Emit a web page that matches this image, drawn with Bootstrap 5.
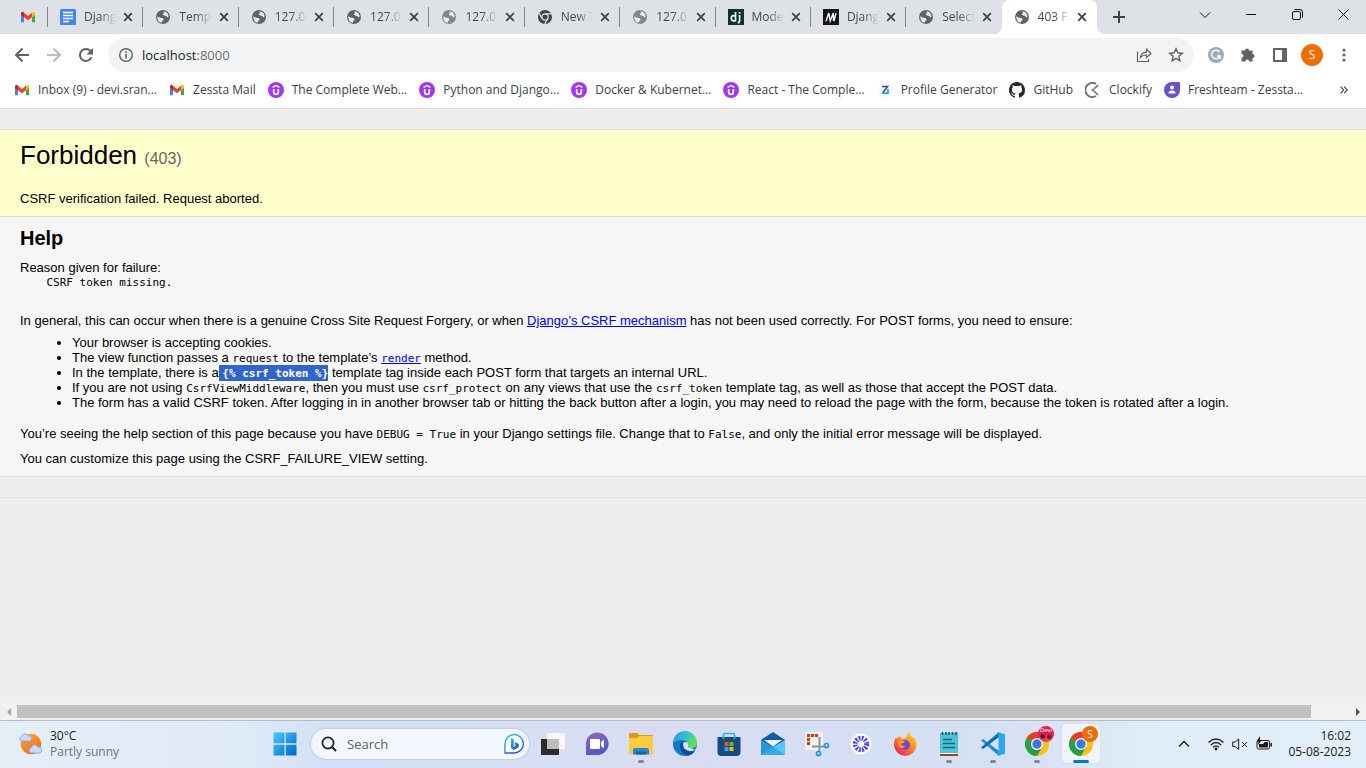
<!DOCTYPE html>
<html lang="en">
<head>
<meta charset="utf-8">
<meta name="viewport" content="width=device-width, initial-scale=1">
<title>403 Forbidden</title>
<link href="https://cdn.jsdelivr.net/npm/bootstrap@5.3.0/dist/css/bootstrap.min.css" rel="stylesheet">
<style>
  :root { --ui: "Open Sans", "Noto Sans", sans-serif; --ink: #5f6368; }
  body { font-family: var(--ui); font-size: 12px; line-height: 16px; color: #3c4043; background: #eee; }
  svg { display: block; flex: none; }
  button { border: 0; background: none; padding: 0; color: inherit; display: flex; align-items: center; justify-content: center; }

  /* tab strip */
  .strip { height: 34px; background: #dee1e6; }
  .tab-list { flex: 1 1 0; min-width: 0; }
  .tab-item { flex: 1 1 0; min-width: 0; padding: 0 7px 0 12px; position: relative; }
  .tab-item.pinned { flex: 0 0 48px; padding: 0 0 0 20px; }
  .tab-item::after { content: ""; position: absolute; right: 0; top: 7px; width: 1px; height: 20px; background: #80868b; }
  .tab-item.before-active::after { display: none; }
  .tab-item.current { background: #fff; border-radius: 8px 8px 0 0; }
  .tab-item.current::before, .tab-item.current::after { content: ""; display: block; position: absolute; top: auto; bottom: 0; width: 8px; height: 8px; }
  .tab-item.current::before { left: -8px; background: radial-gradient(circle at 0 0, #dee1e6 8px, #fff 8px); }
  .tab-item.current::after { right: -8px; background: radial-gradient(circle at 100% 0, #dee1e6 8px, #fff 8px); }
  .tab-name { flex: 1 1 0; min-width: 0; overflow: hidden; white-space: nowrap; margin: 0 4px 0 8px; color: #45494d; -webkit-mask-image: linear-gradient(90deg, #000 50%, transparent); mask-image: linear-gradient(90deg, #000 50%, transparent); }
  .tab-close { width: 16px; height: 16px; color: #3c4043; }
  .strip-end { flex: 0 0 269px; color: #111; }
  .new-tab { width: 44px; height: 34px; color: #3c4043; }
  .win-btn { width: 46px; height: 29px; }

  /* toolbar and bookmarks */
  .toolbar { height: 38px; padding: 4px 6px 0; color: var(--ink); }
  .tool { width: 32px; height: 34px; flex: none; }
  .omnibox { margin: 0 6px; height: 34px; border-radius: 17px; background: #f1f3f4; padding: 0 2px 0 10px; position: relative; }
  .omnibox input { position: absolute; inset: 0; width: 100%; opacity: 0; }
  .address { font-size: 13px; line-height: 20px; color: #202124; margin-left: 8px; }
  .address span { color: #696d72; }
  .avatar { width: 22px; height: 22px; border-radius: 50%; background: #ef6c00; color: #fff; font-size: 12px; }
  .bookmarks { height: 37px; padding: 0 14px; border-bottom: 1px solid #dadce0; }
  .bookmark-list { gap: 12px; }
  .bookmarks a { color: #3c4043; text-decoration: none; white-space: nowrap; display: flex; align-items: center; gap: 8px; }

  /* error document */
  .page-body { font-family: "Liberation Sans", Arial, sans-serif; font-size: 13px; line-height: 15px; color: #000; overflow: hidden; }
  .blank-band { height: 21px; border-bottom: 1px solid #ddd; }
  .summary { background: #ffc; padding: 10px 20px; border-bottom: 1px solid #ddd; }
  .summary h1 { font-size: 26px; line-height: 30px; font-weight: 400; margin: 0 0 21px; }
  .summary h1 span { font-size: 16px; line-height: 16px; color: #666; }
  .info { background: #f6f6f6; padding: 10px 20px; border-bottom: 1px solid #ddd; }
  .info h2 { font-size: 20px; line-height: 22px; font-weight: 700; margin: 0 0 11px; }
  .info p, .summary p { margin: 0; }
  .info pre, .info code { font-family: "DejaVu Sans Mono", monospace; font-size: 11px; line-height: 15px; color: inherit; }
  .info code { line-height: 1; }
  .info pre { margin: 0 0 23px; overflow: visible; }
  .info ul { margin: 7px 0 16px; padding-left: 52px; }
  .info p.closing { margin-top: 10px; }
  .info a { color: #00e; }
  .picked { background: #3065d0; color: #fff; padding-bottom: 1px; }

  /* horizontal scroll bar */
  .hbar { height: 17px; background: #f1f1f1; }
  .hbar button { width: 17px; }
  .hbar-thumb { height: 13px; background: #c1c1c1; }

  /* taskbar */
  .taskbar { height: 48px; padding-bottom: 2px; border-top: 1px solid #b3bdcb; background: linear-gradient(90deg, #e3eef7 0, #dfeaf7 18%, #d3e0f7 24%, #d7dff4 40%, #dadcf0 50%, #d5dff4 62%, #d7e1f3 75%, #e0ecf8 84%, #e2eef8 100%); color: #1b1b1b; }
  .side { flex: 1 0 0; }
  .weather { padding-left: 18px; gap: 7px; }
  .app { width: 44px; height: 45px; position: relative; }
  .app.running::after { content: ""; position: absolute; bottom: 3px; left: 19px; width: 6px; height: 3px; border-radius: 2px; background: #85888f; }
  .app.front::before { content: ""; position: absolute; inset: 3px; border-radius: 4px; background: #f0f4fb; box-shadow: 0 0 1px #a9b5c8; }
  .app.running.front::after { left: 14px; width: 16px; background: #0078d4; }
  .app svg { position: relative; overflow: visible; }
  .face { position: absolute; right: 5px; top: 5px; width: 16px; height: 16px; border-radius: 50%; background: #ef6c00; color: #fff; font-size: 10px; line-height: 16px; }
  .face.photo { background: radial-gradient(circle at 30% 65%, #301018 1px, transparent 3px), radial-gradient(circle at 70% 68%, #571923 1px, transparent 3px), linear-gradient(#df1e57 50%, #e9534d); font-size: 6px; line-height: 9px; }
  .find { width: 218px; height: 30px; margin: 0 2px 0 4px; border-radius: 15px; background: #f3f7fd; box-shadow: 0 0 1px 1px #c3cee2; padding: 0 5px 0 10px; }
  .find input { border: 0; outline: 0; background: none; min-width: 0; font-size: 13px; color: #5d6066; padding: 0; margin-left: 10px; }
  .find input::placeholder { color: #5d6066; opacity: 1; }
  .tray { padding: 0 15px 0 3px; }
  .tray .chevron { margin-right: 18px; }
  .clock { margin-left: 16px; }
</style>
</head>
<body class="d-flex flex-column vh-100 overflow-hidden">

<svg width="0" height="0" class="position-absolute" aria-hidden="true">
  <symbol id="globe" viewBox="0 0 16 16"><circle cx="8" cy="8" r="7" fill="currentColor"/><path d="M2.400 7.200 5 8.700l2.500.2 1 1.300-.2 1.200-1.200.6-.3 1.800C4 13.500 2 10.500 2.400 7.200zM8 2.600l2.600.2C12.600 3.800 13.600 5.800 13.500 7.800l-1.200.7-1-1.500-1.600-.2-1.900-1.200.3-1.200 1.300-.5z" fill="#e9ebee"/></symbol>
  <symbol id="gmail" viewBox="0 0 16 12"><path d="M1 2v9.200h3V5z" fill="#4285f4"/><path d="M15 2v9.200h-3V5z" fill="#34a853"/><path d="M12 1.800 13 .8q2-.4 2 1.700v1.400l-3 2.500z" fill="#fbbc04"/><path d="M4 1.800 3 .8q-2-.4-2 1.700v1.400l3 2.500z" fill="#c5221f"/><path d="m4 1.800 4 3.100 4-3.100v4.500L8 9.300 4 6.300z" fill="#ea4335"/></symbol>
  <symbol id="udemy" viewBox="0 0 16 16"><circle cx="8" cy="8" r="8" fill="#a435f0"/><path d="M4.600 5.400 8 3.500l3.400 1.900" fill="none" stroke="#fff" stroke-width="1.400"/><path d="M5.700 7v3.200q0 2.200 2.300 2.200t2.300-2.200V7" fill="none" stroke="#fff" stroke-width="1.700"/></symbol>
  <symbol id="cross" viewBox="0 0 10 10"><path d="m1.200 1.200 7.600 7.600m0-7.600L1.200 8.800" stroke="currentColor" stroke-width="1.700"/></symbol>
  <symbol id="chrome" viewBox="0 0 24 24"><circle cx="12" cy="12" r="12" fill="#fbc116"/><path d="M12 12 1.600 6A12 12 0 0 1 22.400 6H12z" fill="#e33b2e"/><path d="M1.600 6A12 12 0 0 0 12 24l5.200-9-5.200-3z" fill="#24a148"/><circle cx="12" cy="12" r="6" fill="#fff"/><circle cx="12" cy="12" r="4.700" fill="#3b78e7"/></symbol>
</svg>

<header class="bg-white flex-shrink-0">
  <div class="strip d-flex">
    <div class="tab-list d-flex">
      <div class="tab-item pinned d-flex align-items-center"><svg width="16" height="12"><use href="#gmail"/></svg></div>
      <div class="tab-item d-flex align-items-center"><svg width="16" height="16" viewBox="0 0 16 16"><rect width="16" height="16" rx="1" fill="#4285f4"/><path d="M3 4h10M3 7h10M3 10h10M3 13h6" transform="translate(0 -.5)" stroke="#fff" stroke-width="1.500"/></svg><span class="tab-name">Djang</span><button class="tab-close" aria-label="Close tab"><svg width="10" height="10"><use href="#cross"/></svg></button></div>
      <div class="tab-item d-flex align-items-center"><svg width="16" height="16" color="#5f6368"><use href="#globe"/></svg><span class="tab-name">Templ</span><button class="tab-close" aria-label="Close tab"><svg width="10" height="10"><use href="#cross"/></svg></button></div>
      <div class="tab-item d-flex align-items-center"><svg width="16" height="16" color="#5f6368"><use href="#globe"/></svg><span class="tab-name">127.0.</span><button class="tab-close" aria-label="Close tab"><svg width="10" height="10"><use href="#cross"/></svg></button></div>
      <div class="tab-item d-flex align-items-center"><svg width="16" height="16" color="#5f6368"><use href="#globe"/></svg><span class="tab-name">127.0.</span><button class="tab-close" aria-label="Close tab"><svg width="10" height="10"><use href="#cross"/></svg></button></div>
      <div class="tab-item d-flex align-items-center"><svg width="16" height="16" color="#858585"><use href="#globe"/></svg><span class="tab-name">127.0.</span><button class="tab-close" aria-label="Close tab"><svg width="10" height="10"><use href="#cross"/></svg></button></div>
      <div class="tab-item d-flex align-items-center"><svg width="16" height="16" viewBox="0 0 16 16"><circle cx="8" cy="8" r="7" fill="#3f4347"/><circle cx="8" cy="8" r="3.200" fill="#3f4347" stroke="#dee1e6" stroke-width="1.200"/><path d="M8 4.800h6.500M5.200 9.600 2 4M10.800 9.600 7.600 15" stroke="#dee1e6" stroke-width="1.200"/></svg><span class="tab-name">New T</span><button class="tab-close" aria-label="Close tab"><svg width="10" height="10"><use href="#cross"/></svg></button></div>
      <div class="tab-item d-flex align-items-center"><svg width="16" height="16" color="#858585"><use href="#globe"/></svg><span class="tab-name">127.0.</span><button class="tab-close" aria-label="Close tab"><svg width="10" height="10"><use href="#cross"/></svg></button></div>
      <div class="tab-item d-flex align-items-center"><svg width="16" height="16" viewBox="0 0 16 16"><rect width="16" height="16" fill="#113228"/><path d="M7.500 3v8.600q-4.200 1-4.200-2.300t3.500-2.500M11.600 6v5.500q0 2-1.800 2.300M11.600 3v1.700" fill="none" stroke="#fff" stroke-width="1.700"/></svg><span class="tab-name">Mode</span><button class="tab-close" aria-label="Close tab"><svg width="10" height="10"><use href="#cross"/></svg></button></div>
      <div class="tab-item d-flex align-items-center"><svg width="16" height="16" viewBox="0 0 16 16"><rect width="16" height="16" fill="#15141a"/><path d="M3 12.300 5.800 4l1.400 8L10.300 4l.2 8M13 4l-2 8" fill="none" stroke="#fff" stroke-width="1.400"/></svg><span class="tab-name">Djang</span><button class="tab-close" aria-label="Close tab"><svg width="10" height="10"><use href="#cross"/></svg></button></div>
      <div class="tab-item before-active d-flex align-items-center"><svg width="16" height="16" color="#5f6368"><use href="#globe"/></svg><span class="tab-name">Select</span><button class="tab-close" aria-label="Close tab"><svg width="10" height="10"><use href="#cross"/></svg></button></div>
      <div class="tab-item current d-flex align-items-center"><svg width="16" height="16" color="#5f6368"><use href="#globe"/></svg><span class="tab-name">403 F</span><button class="tab-close" aria-label="Close tab"><svg width="10" height="10"><use href="#cross"/></svg></button></div>
    </div>
    <div class="strip-end d-flex">
      <button class="new-tab me-auto" aria-label="New tab"><svg width="12" height="12" viewBox="0 0 12 12"><path d="M6 0v12M0 6h12" stroke="currentColor" stroke-width="2"/></svg></button>
      <button class="win-btn" aria-label="Search tabs"><svg width="12" height="8" viewBox="0 0 12 8"><path d="m1 1.500 5 5 5-5" fill="none" stroke="currentColor"/></svg></button>
      <button class="win-btn" aria-label="Minimize"><svg width="10" height="1" viewBox="0 0 10 1"><path d="M0 .5h10" stroke="currentColor"/></svg></button>
      <button class="win-btn" aria-label="Restore"><svg width="11" height="11" viewBox="0 0 11 11"><rect x=".5" y="2.500" width="8" height="8" rx="1.500" fill="none" stroke="currentColor"/><path d="M2.500.5H8q2.500 0 2.500 2.500v5.500" fill="none" stroke="currentColor"/></svg></button>
      <button class="win-btn" aria-label="Close"><svg width="11" height="11" viewBox="0 0 11 11"><path d="m.5.5 10 10m0-10-10 10" stroke="currentColor"/></svg></button>
    </div>
  </div>

  <div class="toolbar d-flex align-items-center">
    <button class="tool" aria-label="Back"><svg width="16" height="16" viewBox="0 0 16 16"><path d="M15 8H2m6.500-6.500L2 8l6.500 6.500" fill="none" stroke="currentColor" stroke-width="2"/></svg></button>
    <button class="tool" aria-label="Forward"><svg width="16" height="16" viewBox="0 0 16 16"><path d="M1 8h13M7.500 1.500 14 8l-6.500 6.500" fill="none" stroke="#babcbe" stroke-width="2"/></svg></button>
    <button class="tool" aria-label="Reload"><svg width="16" height="16" viewBox="0 0 16 16"><path d="M13.500 10.200A6 6 0 1 1 12.500 4l1 1" fill="none" stroke="currentColor" stroke-width="2"/><path d="M15 1v6.500H8.500z" fill="currentColor"/></svg></button>
    <div class="omnibox d-flex align-items-center flex-grow-1">
      <svg width="16" height="16" viewBox="0 0 16 16"><circle cx="8" cy="8" r="6.300" fill="none" stroke="currentColor" stroke-width="1.400"/><path d="M8 7v4.500M8 4.300v1.600" stroke="currentColor" stroke-width="1.600"/></svg>
      <label for="url" class="address flex-grow-1">localhost<span>:8000</span></label>
      <input id="url" type="text">
      <button class="tool position-relative" aria-label="Share"><svg width="16" height="16" viewBox="0 0 16 16"><path d="M1.500 4.500v10h11V12M4.500 10.500q.5-5 6-5.300V2.200L15 6.500l-4.500 4V8q-4-.2-6 2.500z" fill="none" stroke="currentColor" stroke-width="1.200"/></svg></button>
      <button class="tool position-relative" aria-label="Bookmark"><svg width="16" height="16" viewBox="0 0 16 16"><path d="m8 1.800 1.800 4 4.500.5-3.400 3 1 4.400L8 11.400l-3.900 2.300 1-4.400-3.400-3 4.500-.5z" fill="none" stroke="currentColor" stroke-width="1.400"/></svg></button>
    </div>
    <button class="tool" aria-label="Grammar extension"><svg width="16" height="16" viewBox="0 0 16 16"><circle cx="8" cy="8" r="8" fill="#a0a7c4"/><path d="M11.500 5A4.300 4.300 0 1 0 12 9H9m3 0v3.200" fill="none" stroke="#fff" stroke-width="1.500"/></svg></button>
    <button class="tool" aria-label="Extensions"><svg width="16" height="16" viewBox="0 0 16 16"><path d="M1.500 3.500H5a2 2 0 1 1 4 0h3.500V7a2 2 0 1 1 0 4v3.500H9.200a1.900 1.900 0 0 0-3.800 0H1.500v-3.800a1.900 1.900 0 0 0 0-3.800z" fill="currentColor"/></svg></button>
    <button class="tool" aria-label="Side panel"><svg width="14" height="14" viewBox="0 0 14 14"><path d="M1 1h12v12H1z" fill="none" stroke="currentColor" stroke-width="2"/><path d="M9 0h5v14H9z" fill="currentColor"/></svg></button>
    <button class="tool" aria-label="Profile"><span class="avatar d-flex align-items-center justify-content-center">S</span></button>
    <button class="tool" aria-label="Menu"><svg width="4" height="14" viewBox="0 0 4 14" fill="currentColor"><circle cx="2" cy="2" r="1.600"/><circle cx="2" cy="7" r="1.600"/><circle cx="2" cy="12" r="1.600"/></svg></button>
  </div>

  <nav class="bookmarks d-flex align-items-center">
    <div class="bookmark-list d-flex flex-grow-1">
      <a href="#"><svg width="16" height="12"><use href="#gmail"/></svg>Inbox (9) - devi.sran...</a>
      <a href="#"><svg width="16" height="12"><use href="#gmail"/></svg>Zessta Mail</a>
      <a href="#"><svg width="16" height="16"><use href="#udemy"/></svg>The Complete Web...</a>
      <a href="#"><svg width="16" height="16"><use href="#udemy"/></svg>Python and Django...</a>
      <a href="#"><svg width="16" height="16"><use href="#udemy"/></svg>Docker &amp; Kubernet...</a>
      <a href="#"><svg width="16" height="16"><use href="#udemy"/></svg>React - The Comple...</a>
      <a href="#"><svg width="16" height="16" viewBox="0 0 16 16"><circle cx="8" cy="8" r="7" fill="#f5f7f8"/><path d="M5 4.500h5.500L6 10.500" fill="none" stroke="#2a4f9c" stroke-width="1.500"/><path d="M11 7v4.300H5" fill="none" stroke="#1d97c9" stroke-width="1.500"/></svg>Profile Generator</a>
      <a href="#"><svg width="16" height="16" viewBox="0 0 16 16"><path fill="#24292f" d="M8 0C3.580 0 0 3.580 0 8c0 3.540 2.290 6.530 5.470 7.590.4.070.55-.17.55-.38 0-.19-.010-.82-.010-1.490-2.010.37-2.530-.49-2.690-.94-.09-.23-.48-.94-.82-1.130-.28-.15-.68-.52-.010-.53.63-.010 1.080.58 1.230.82.72 1.210 1.870.87 2.330.66.070-.52.280-.87.510-1.070-1.780-.2-3.640-.89-3.640-3.950 0-.87.310-1.590.820-2.150-.08-.2-.36-1.020.080-2.120 0 0 .67-.21 2.200.82a7.600 7.600 0 0 1 4 0c1.530-1.040 2.200-.82 2.200-.82.44 1.100.160 1.920.080 2.120.510.560.820 1.270.820 2.150 0 3.070-1.870 3.750-3.650 3.950.290.250.540.730.540 1.480 0 1.070-.010 1.930-.010 2.200 0 .210.150.460.550.380A8 8 0 0 0 16 8c0-4.420-3.580-8-8-8z"/></svg>GitHub</a>
      <a href="#"><svg width="16" height="16" viewBox="0 0 16 16"><path d="M11 2a7 7 0 1 0 0 12" fill="none" stroke="#6b6f73" stroke-width="2"/><path d="m9 7 4-4M9 9l4 4" stroke="#6b6f73" stroke-width="1.600"/><circle cx="7.800" cy="8" r="1.300" fill="#6b6f73"/></svg>Clockify</a>
      <a href="#"><svg width="16" height="16" viewBox="0 0 16 16"><path d="M8 0h7q1 0 1 1v7a8 8 0 1 1-8-8z" fill="#6d50cc"/><circle cx="8" cy="5.500" r="2" fill="#fff"/><path d="M4.500 11.500q0-3 3.500-3t3.500 3z" fill="#fff"/></svg>Freshteam - Zessta...</a>
    </div>
    <button class="px-1" aria-label="More bookmarks"><svg width="8" height="8" viewBox="0 0 8 8"><path d="m.6.6 3 3.400-3 3.400m3.600-6.800 3 3.400-3 3.400" fill="none" stroke="#50545a" stroke-width="1.300"/></svg></button>
  </nav>
</header>

<main class="page-body flex-grow-1">
  <div class="blank-band"></div>
  <section class="summary">
    <h1>Forbidden <span>(403)</span></h1>
    <p>CSRF verification failed. Request aborted.</p>
  </section>
  <section class="info">
    <h2>Help</h2>
    <p>Reason given for failure:</p>
    <pre>    CSRF token missing.</pre>
    <p>In general, this can occur when there is a genuine Cross Site Request Forgery, or when <a href="#">Django’s CSRF mechanism</a> has not been used correctly. For POST forms, you need to ensure:</p>
    <ul>
      <li>Your browser is accepting cookies.</li>
      <li>The view function passes a <code>request</code> to the template’s <a href="#"><code>render</code></a> method.</li>
      <li>In the template, there is a<span class="picked"> <code class="fw-bold">{% csrf_token %}</code></span> template tag inside each POST form that targets an internal URL.</li>
      <li>If you are not using <code>CsrfViewMiddleware</code>, then you must use <code>csrf_protect</code> on any views that use the <code>csrf_token</code> template tag, as well as those that accept the POST data.</li>
      <li>The form has a valid CSRF token. After logging in in another browser tab or hitting the back button after a login, you may need to reload the page with the form, because the token is rotated after a login.</li>
    </ul>
    <p>You’re seeing the help section of this page because you have <code>DEBUG = True</code> in your Django settings file. Change that to <code>False</code>, and only the initial error message will be displayed.</p>
    <p class="closing">You can customize this page using the CSRF_FAILURE_VIEW setting.</p>
  </section>
  <div class="blank-band"></div>
</main>

<div class="hbar d-flex align-items-center flex-shrink-0">
  <button aria-label="Scroll left"><svg width="4" height="8" viewBox="0 0 4 8"><path d="M4 0v8L0 4z" fill="#a3a3a3"/></svg></button>
  <div class="flex-grow-1"><div class="hbar-thumb" style="width:97.150%"></div></div>
  <button aria-label="Scroll right"><svg width="4" height="8" viewBox="0 0 4 8"><path d="M0 0v8l4-4z" fill="#505050"/></svg></button>
</div>

<footer class="taskbar d-flex align-items-center flex-shrink-0">
  <div class="side weather d-flex align-items-center">
    <svg width="25" height="24" viewBox="0 0 25 24"><defs><linearGradient id="sun" x2=".6" y2="1"><stop stop-color="#fbb034"/><stop offset="1" stop-color="#f26a1b"/></linearGradient></defs><circle cx="13" cy="12" r="10.300" fill="url(#sun)"/><path d="M3 9a2.500 2.500 0 0 1 .5-4.500 3.800 3.800 0 0 1 7-.5A2.600 2.600 0 0 1 12 9zM13 21a2.700 2.700 0 0 1 0-5.200 3.700 3.700 0 0 1 7-.8A3 3 0 0 1 21.500 21z" fill="#cbd8f8" stroke="#7e9be0" stroke-width=".8"/></svg>
    <div>
      <div>30°C</div>
      <div class="text-secondary">Partly sunny</div>
    </div>
  </div>

  <div class="d-flex align-items-center">
    <button class="app" aria-label="Start"><svg width="24" height="24" viewBox="0 0 24 24"><defs><linearGradient id="win" x2="1" y2="1"><stop stop-color="#4cc8fb"/><stop offset="1" stop-color="#0067c6"/></linearGradient></defs><path d="M.5.5H12v11H.500zM12.500.5h11v11h-11zM.5 12.500H12v11H.500zM12.500 12.500h11v11h-11z" fill="url(#win)"/><path d="M12 0v24M0 12h24" stroke="#d9e6f8"/></svg></button>
    <div class="find d-flex align-items-center">
      <svg width="16" height="16" viewBox="0 0 16 16"><circle cx="7" cy="7" r="5.600" fill="none" stroke="#222" stroke-width="1.700"/><path d="m11 11 4 4" stroke="#222" stroke-width="1.900"/></svg>
      <input class="flex-grow-1" type="text" placeholder="Search" aria-label="Search">
      <button aria-label="Bing chat"><svg width="20" height="20" viewBox="0 0 20 20"><defs><linearGradient id="bing" x2=".6" y2="1"><stop stop-color="#27c3f2"/><stop offset="1" stop-color="#1b54c9"/></linearGradient></defs><path d="M1 19v-8.500a9.200 9.200 0 1 1 9 8.500z" fill="#fff" stroke="url(#bing)" stroke-width="1.300"/><path d="m7 4 2.800 1.200v7L7 14zM10.500 8l4 1.800q1.200 3.200-1.500 4.500L9.500 16 7 14l4.500-2.300z" fill="url(#bing)"/></svg></button>
    </div>
    <button class="app" aria-label="Task view"><svg width="24" height="24" viewBox="0 0 24 24"><path d="M0 7h18v16H0z" fill="#2b2b2b"/><path d="M6 1h18v16H6z" fill="#f8f8f8"/><path d="M6 7h12v10H6z" fill="#bcbcbc"/></svg></button>
    <button class="app" aria-label="Chat"><svg width="24" height="24" viewBox="0 0 24 24"><defs><linearGradient id="teams" x2=".3" y2="1"><stop stop-color="#9467ba"/><stop offset="1" stop-color="#5058c9"/></linearGradient></defs><path d="M1 23V12A11.300 11.300 0 1 1 12 23z" fill="url(#teams)"/><rect x="5" y="7" width="10" height="10" rx="1" fill="#fff"/><path d="m16 10 3-2.500v9L16 14z" fill="#fff"/></svg></button>
    <button class="app running" aria-label="File Explorer"><svg width="24" height="24" viewBox="0 0 24 24"><path d="M0 2q0-1 1-1h7l2 2h13q1 0 1 1v5H0z" fill="#d79a12"/><path d="M0 6h8l2-2h14v18.500H0z" fill="#fdcb3d"/><path d="M4 22.500V18q0-2 2-2h12q2 0 2 2v4.500z" fill="#2685cf"/><path d="M7 19.500h10v3H7z" fill="#1263a6"/></svg></button>
    <button class="app" aria-label="Edge"><svg width="24" height="24" viewBox="0 0 24 24"><defs><linearGradient id="edge1" x2="1" y2=".3"><stop stop-color="#239ad8"/><stop offset=".6" stop-color="#35c3cf"/><stop offset="1" stop-color="#65dd58"/></linearGradient></defs><circle cx="12" cy="12" r="12" fill="#1079ce"/><path d="M0 11A12 12 0 0 1 24 11q0 5-5 5.300-5 0-4-3 .5-5-6-5.300Q3 8 0 11z" fill="url(#edge1)"/><path d="M7 12q-1 7 6 11.500 6 .5 9-5-5 2.500-9-.5-3-3-1.500-7-3-2-4.500 1z" fill="#0c4f91"/><path d="M10 12q0 7 8 7 3 0 5-2l1 3-2-1.500-3-2.300q-5-.2-4-3 .4-3-2-3.200-3 0-3 2z" fill="#dce3f4"/></svg></button>
    <button class="app" aria-label="Store"><svg width="24" height="24" viewBox="0 0 24 24"><path d="M6.500 7V3q0-1.500 1.500-1.500h8q1.500 0 1.500 1.500v4" fill="none" stroke="#2cb1ef" stroke-width="1.700"/><path d="M.5 5h23v15q0 4-4 4h-15q-4 0-4-4z" fill="#164a83"/><path d="M6.500 7V4.500m11 2.500V4.500" stroke="#2cb1ef" stroke-width="1.700"/><path d="M7.500 10h4v4h-4z" fill="#f25022"/><path d="M12.500 10h4v4h-4z" fill="#7fba00"/><path d="M7.500 15h4v4h-4z" fill="#2aa8ee"/><path d="M12.500 15h4v4h-4z" fill="#ffb900"/></svg></button>
    <button class="app" aria-label="Mail"><svg width="24" height="24" viewBox="0 0 24 24"><path d="M0 8 12 0l12 8v7H0z" fill="#0f5ba7"/><path d="M0 8l12 7 12-7v15H0z" fill="#2399df"/><path d="M3 8h18l-9 6.500z" fill="#f2f4f6"/><path d="M24 8v15L12 15z" fill="#55c8f4"/><path d="m0 23 12-8 12 8z" fill="#35aae6"/></svg></button>
    <button class="app" aria-label="Snipping Tool"><svg width="24" height="24" viewBox="0 0 24 24"><rect width="18" height="18" rx="1" fill="#f3f3f3"/><path d="M3.500 13V3.500H14" fill="none" stroke="#d4380d" stroke-width="3" stroke-dasharray="3 1"/><path d="M14.500 5v14M7 14.500h12" stroke="#8a929b" stroke-width="2"/><circle cx="21.500" cy="13.500" r="2" fill="none" stroke="#1b97dc" stroke-width="1.700"/><circle cx="13.500" cy="21.500" r="2" fill="none" stroke="#1b97dc" stroke-width="1.700"/></svg></button>
    <button class="app" aria-label="Time tracker"><svg width="24" height="24" viewBox="0 0 24 24"><circle cx="12" cy="12" r="10.500" fill="#fff"/><circle cx="12" cy="12" r="5.700" fill="none" stroke="#4b47e5" stroke-width="5" stroke-dasharray="1.800 1.185"/></svg></button>
    <button class="app" aria-label="Firefox"><svg width="24" height="24" viewBox="0 0 24 24"><defs><linearGradient id="fox" x1="1" x2=".2" y2="1"><stop stop-color="#ffe226"/><stop offset=".5" stop-color="#ff8a1e"/><stop offset="1" stop-color="#f5156c"/></linearGradient></defs><path d="M1 13Q1 8 3 5l1 2 2-3 3 3 4-1q1-4 3-6 1 4 4 6l1-1q3 5 2.500 9A11.300 11.300 0 0 1 1 13z" fill="url(#fox)"/><circle cx="12" cy="13" r="5" fill="#7543d6"/><path d="M5 9q4-2 7 1l-4 2q2 3 5 2-5 5-8-1z" fill="#ff9a1d"/></svg></button>
    <button class="app running" aria-label="Notepad"><svg width="24" height="24" viewBox="0 0 24 24"><path d="M3 1h18v21H3z" fill="#4fc0d7"/><path d="M3 21h18v3H3z" fill="#8e4a14"/><path d="M3 21h18v1H3z" fill="#fff"/><path d="M5.500 0v3m3.500-3v3m3-3v3m3.500-3v3M19 0v3" stroke="#155a71" stroke-width="1.600"/><path d="M6 7.500h9M6 11.500h12M6 15.500h12" stroke="#106a84" stroke-width="1.600"/></svg></button>
    <button class="app running" aria-label="Visual Studio Code"><svg width="24" height="24" viewBox="0 0 24 24"><path d="M0 8.500 2 7l16 12v5z" fill="#1b8ddb"/><path d="m0 15.500 2 1.500L18 5V0z" fill="#0b6fb8"/><path d="m17.500 0 6.500 2.500v19L17.500 24z" fill="#29a9f2"/></svg></button>
    <button class="app running" aria-label="Chrome, first profile"><svg width="24" height="24"><use href="#chrome"/></svg><span class="face photo">Devi</span></button>
    <button class="app running front" aria-label="Chrome, second profile"><svg width="24" height="24"><use href="#chrome"/></svg><span class="face">S</span></button>
  </div>

  <div class="side tray d-flex align-items-center justify-content-end">
    <button class="chevron" aria-label="Hidden icons"><svg width="12" height="8" viewBox="0 0 12 8"><path d="m1 6.500 5-5 5 5" fill="none" stroke="currentColor" stroke-width="1.400"/></svg></button>
    <button class="gap-2" aria-label="Network, sound and battery">
      <svg width="16" height="16" viewBox="0 0 16 16"><path d="M.5 6.500q7.500-7 15 0M2.800 9q5.200-5 10.400 0M5 11.300q3-2.800 6 0" fill="none" stroke="currentColor" stroke-width="1.200"/><circle cx="8" cy="13" r="1.400" fill="currentColor"/></svg>
      <svg width="16" height="16" viewBox="0 0 16 16"><path d="M.7 6v4.500h2.500l3.500 3V3L3.200 6zM10 6l5 5m0-5-5 5" fill="none" stroke="currentColor"/></svg>
      <svg width="16" height="16" viewBox="0 0 16 16"><rect x="1" y="4.500" width="12.500" height="8.500" rx="1.500" fill="none" stroke="currentColor"/><path d="M3 8h4l1.500-2H12v5.500H3zM14.500 7H16v3.500h-1.500zM4 0 .5 5.500h2L2 9l4-5H4z" fill="currentColor"/></svg>
    </button>
    <div class="clock text-end">
      <div>16:02</div>
      <div>05-08-2023</div>
    </div>
  </div>
</footer>

<script src="https://cdn.jsdelivr.net/npm/bootstrap@5.3.0/dist/js/bootstrap.bundle.min.js"></script>
</body>
</html>
